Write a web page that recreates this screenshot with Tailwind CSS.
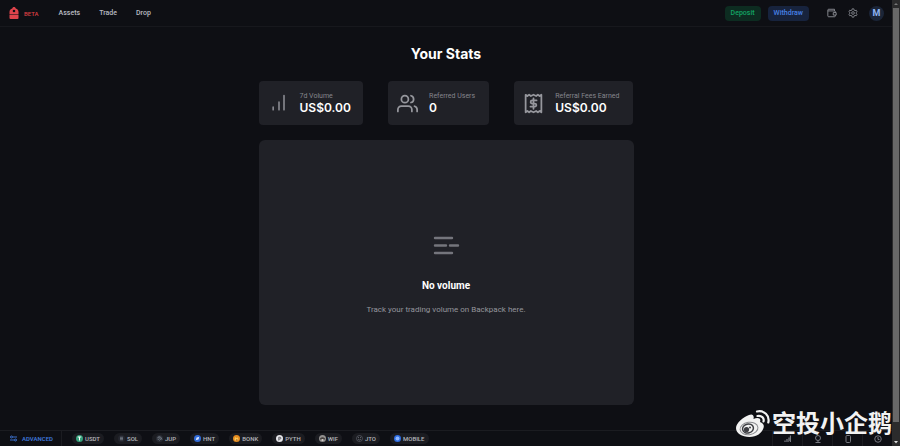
<!doctype html>
<html lang="en">
  <head>
    <meta charset="UTF-8" />
    <meta name="viewport" content="width=device-width, initial-scale=1.0" />
    <title>Backpack Exchange</title>
    <script src="https://cdn.jsdelivr.net/npm/@tailwindcss/browser@4"></script>
  </head>
  <body
    class="relative flex h-screen overflow-hidden bg-[#0e0f14] font-['Roboto','Noto_Sans_CJK_SC',sans-serif] text-white"
  >
    <div class="flex min-w-0 grow flex-col">
      <header
        class="flex h-[27px] shrink-0 items-center border-b border-[#17181d] pr-2 pl-[9px]"
      >
        <a class="flex items-center gap-[5px]" href="#">
          <svg class="h-3 w-[10px]" viewBox="0 0 20 24" fill="#e0444c">
            <path
              fill-rule="evenodd"
              d="M6.500 3C7 1 8.300 0 10 0s3 1 3.500 3C17 4 19 6.500 19 10v4.500H1V10c0-3.500 2-6 5.500-7ZM10 5.500a2.600 2.600 0 1 0 0 5.200 2.600 2.600 0 0 0 0-5.200Z"
            />
            <path d="M1 15.500h18V22a2 2 0 0 1-2 2H3a2 2 0 0 1-2-2z" />
          </svg>
          <span class="text-[6px] font-medium text-[#d93f43]">BETA</span>
        </a>

        <nav class="ml-5">
          <ul class="flex gap-[19px] text-[7px] font-medium text-[#b9bbc2]">
            <li><a href="#">Assets</a></li>
            <li><a href="#">Trade</a></li>
            <li><a href="#">Drop</a></li>
          </ul>
        </nav>

        <div class="ml-auto flex items-center">
          <button
            class="h-[15px] rounded bg-[#0d2c21] px-[6px] text-[7px] font-medium text-[#13a565]"
          >
            Deposit
          </button>
          <button
            class="ml-[7px] h-[15px] rounded bg-[#17233d] px-[6px] text-[7px] font-medium text-[#4781e6]"
          >
            Withdraw
          </button>
          <button class="ml-[18px] text-[#8d8f96]" aria-label="Wallet">
            <svg
              class="size-[10px]"
              viewBox="0 0 24 24"
              fill="none"
              stroke="currentColor"
              stroke-width="2.200"
              stroke-linejoin="round"
            >
              <path d="M18 7V3H4a2 2 0 0 0-2 2v14a2 2 0 0 0 2 2h14a2 2 0 0 0 2-2v-2" />
              <path d="M2 7h16a2 2 0 0 1 2 2v2M15 11h7v6h-7z" />
            </svg>
          </button>
          <button class="ml-[11px] text-[#8d8f96]" aria-label="Settings">
            <svg
              class="size-[10px]"
              viewBox="0 0 24 24"
              fill="none"
              stroke="currentColor"
              stroke-width="2"
              stroke-linejoin="round"
            >
              <path
                d="M10 2h4l.7 3.200 2 1.200 3.200-1 2 3.400-2.500 2.200v2l2.500 2.200-2 3.400-3.200-1-2 1.200L14 22h-4l-.7-3.200-2-1.200-3.200 1-2-3.400L4.600 13v-2L2.100 8.800l2-3.400 3.200 1 2-1.200z"
              />
              <circle cx="12" cy="12" r="3.200" />
            </svg>
          </button>
          <button
            class="ml-[11px] size-[15px] rounded-full bg-[#1b2538] text-[9px] leading-none font-bold text-[#8fb5f5]"
            aria-label="Account"
          >
            M
          </button>
        </div>
      </header>

      <main class="mx-auto flex w-full max-w-[375px] grow flex-col">
        <h1
          class="mt-[17px] text-center font-['Inter',sans-serif] text-[14px] leading-5 font-bold"
        >
          Your Stats
        </h1>

        <div class="mt-[17px] flex justify-between">
          <section
            class="flex h-11 items-center rounded bg-[#202127] pr-3 pl-[10px]"
          >
            <svg
              class="size-5 text-[#85868d]"
              viewBox="0 0 24 24"
              fill="none"
              stroke="currentColor"
              stroke-width="2"
              stroke-linecap="round"
            >
              <path d="M5 20v-3M12 20v-9M18 20V3" />
            </svg>
            <div class="ml-[11px]">
              <h2 class="text-[7px] leading-[10px] text-[#85868d]">7d Volume</h2>
              <p
                class="font-['Inter',sans-serif] text-[12px] leading-[14px] font-semibold"
              >
                US$0.00
              </p>
            </div>
          </section>

          <section
            class="flex h-11 items-center rounded bg-[#202127] pr-[14px] pl-[9px]"
          >
            <svg
              class="size-[21px] text-[#96979d]"
              viewBox="0 0 24 24"
              fill="none"
              stroke="currentColor"
              stroke-width="2"
              stroke-linecap="round"
              stroke-linejoin="round"
            >
              <path d="M17 21v-2a4 4 0 0 0-4-4H5a4 4 0 0 0-4 4v2" />
              <circle cx="9" cy="7" r="4" />
              <path d="M23 21v-2a4 4 0 0 0-3-3.870M16 3.130a4 4 0 0 1 0 7.750" />
            </svg>
            <div class="ml-[11px]">
              <h2 class="text-[7px] leading-[10px] text-[#85868d]">
                Referred Users
              </h2>
              <p
                class="font-['Inter',sans-serif] text-[12px] leading-[14px] font-semibold"
              >
                0
              </p>
            </div>
          </section>

          <section
            class="flex h-11 items-center rounded bg-[#202127] pr-[14px] pl-[9px]"
          >
            <svg
              class="size-[21px] text-[#96979d]"
              viewBox="0 0 24 24"
              fill="none"
              stroke="currentColor"
              stroke-width="2"
              stroke-linecap="round"
              stroke-linejoin="round"
            >
              <path
                d="M3 2l2 1.500L7 2l2 1.500L12 2l3 1.500L17 2l2 1.500L21 2v20l-2-1.500L17 22l-2-1.500L12 22l-3-1.500L7 22l-2-1.500L3 22z"
              />
              <path
                d="M12 6v12M15.500 8.500h-5a1.750 1.750 0 0 0 0 3.500h3a1.750 1.750 0 0 1 0 3.500h-5"
              />
            </svg>
            <div class="ml-[11px]">
              <h2 class="text-[7px] leading-[10px] text-[#85868d]">
                Referral Fees Earned
              </h2>
              <p
                class="font-['Inter',sans-serif] text-[12px] leading-[14px] font-semibold"
              >
                US$0.00
              </p>
            </div>
          </section>
        </div>

        <section
          class="mt-[15px] flex h-[265px] flex-col items-center rounded-md bg-[#202127] pt-[92px]"
        >
          <svg
            class="size-7 text-[#74757c]"
            viewBox="0 0 28 28"
            fill="none"
            stroke="currentColor"
            stroke-width="2.400"
            stroke-linecap="round"
          >
            <path d="M3 6h17M3 13.500h11M18 13.500h8M3 21h17" />
          </svg>
          <h2 class="mt-5 text-[10px] leading-3 font-bold">No volume</h2>
          <p class="mt-3 text-[8px] leading-3 text-[#94959c]">
            Track your trading volume on Backpack here.
          </p>
        </section>
      </main>

      <footer
        class="flex h-4 shrink-0 items-center border-t border-[#1b1c21] pl-[10px] text-[6px] font-medium text-[#b4b6bd]"
      >
        <button
          class="flex h-full items-center gap-[5px] border-r border-[#1b1c21] pr-[8px] font-semibold text-[#3f78dc]"
        >
          <svg
            class="h-[7px] w-[7px]"
            viewBox="0 0 14 14"
            fill="none"
            stroke="currentColor"
            stroke-width="1.800"
          >
            <path d="M0 4h1M5 4h9M0 10h9M13 10h1" />
            <circle cx="3" cy="4" r="2" />
            <circle cx="11" cy="10" r="2" />
          </svg>
          ADVANCED
        </button>
        <ul class="ml-[10px] flex gap-[10px]">
          <li>
            <a class="flex h-[11px] items-center gap-[2px] rounded-full bg-[#1b1c21] px-1" href="#">
              <svg class="size-[7px]" viewBox="0 0 14 14">
                <circle cx="7" cy="7" r="7" fill="#35a17b" />
                <path d="M3.500 4h7M7 4v7" stroke="#fff" stroke-width="2" />
              </svg>
              USDT
            </a>
          </li>
          <li>
            <a class="flex h-[11px] items-center gap-[2px] rounded-full bg-[#1b1c21] px-1" href="#">
              <svg class="size-[7px]" viewBox="0 0 14 14">
                <circle cx="7" cy="7" r="7" fill="#24262e" />
                <path d="M4 4.500h6M4 7h6M4 9.500h6" stroke="#8d96a3" stroke-width="1.300" />
              </svg>
              SOL
            </a>
          </li>
          <li>
            <a class="flex h-[11px] items-center gap-[2px] rounded-full bg-[#1b1c21] px-1" href="#">
              <svg class="size-[7px]" viewBox="0 0 14 14" fill="none">
                <circle cx="7" cy="7" r="7" fill="#2a2d35" />
                <path d="M3 5q5-1 7 5M5 3q6 0 7 6M3 8q3 0 4 3" stroke="#8d96a3" stroke-width="1.300" />
              </svg>
              JUP
            </a>
          </li>
          <li>
            <a class="flex h-[11px] items-center gap-[2px] rounded-full bg-[#1b1c21] px-1" href="#">
              <svg class="size-[7px]" viewBox="0 0 14 14">
                <circle cx="7" cy="7" r="7" fill="#316bd8" />
                <circle cx="7" cy="7" r="2.500" fill="#dce8ff" />
                <path d="M4 10l6-6" stroke="#dce8ff" stroke-width="1.800" />
              </svg>
              HNT
            </a>
          </li>
          <li>
            <a class="flex h-[11px] items-center gap-[2px] rounded-full bg-[#1b1c21] px-1" href="#">
              <svg class="size-[7px]" viewBox="0 0 14 14">
                <circle cx="7" cy="7" r="7" fill="#e58b20" />
                <path d="M3 10l1-6 3 2 3-1 1 5-4 2z" fill="#f7c955" />
                <path d="M6 9h3v2H6z" fill="#a33e20" />
              </svg>
              BONK
            </a>
          </li>
          <li>
            <a class="flex h-[11px] items-center gap-[2px] rounded-full bg-[#1b1c21] px-1" href="#">
              <svg class="size-[7px]" viewBox="0 0 14 14" fill="none">
                <circle cx="7" cy="7" r="7" fill="#e6e6ea" />
                <path d="M5.500 11V4.500H8a1.800 1.800 0 0 1 0 3.600H6" stroke="#34353c" stroke-width="1.400" />
              </svg>
              PYTH
            </a>
          </li>
          <li>
            <a class="flex h-[11px] items-center gap-[2px] rounded-full bg-[#1b1c21] px-1" href="#">
              <svg class="size-[7px]" viewBox="0 0 14 14">
                <circle cx="7" cy="7" r="7" fill="#92908f" />
                <path d="M2 7q5-5 10 0v2H2z" fill="#45403e" />
                <circle cx="7" cy="10" r="2" fill="#d8d2cd" />
              </svg>
              WIF
            </a>
          </li>
          <li>
            <a class="flex h-[11px] items-center gap-[2px] rounded-full bg-[#1b1c21] px-1" href="#">
              <svg class="size-[7px]" viewBox="0 0 14 14" fill="none" stroke="#777b84">
                <circle cx="7" cy="7" r="6" />
                <path d="M4 5h2M8 5h2M4 8q3 4 6 0" stroke-width="1.400" />
              </svg>
              JTO
            </a>
          </li>
          <li>
            <a class="flex h-[11px] items-center gap-[2px] rounded-full bg-[#1b1c21] px-1" href="#">
              <svg class="size-[7px]" viewBox="0 0 14 14">
                <circle cx="7" cy="7" r="7" fill="#2d6be0" />
                <circle cx="7" cy="7" r="4" fill="#8fb8ff" />
              </svg>
              MOBILE
            </a>
          </li>
        </ul>
        <div class="ml-auto flex h-full text-[#777980]">
          <button class="grid w-[30px] place-items-center border-l border-[#1b1c21]" aria-label="Connection">
            <svg class="size-[7px]" viewBox="0 0 14 14" stroke="currentColor" stroke-width="2.500">
              <path d="M2 14v-3M6 14V8M10 14V5M13 14V1" />
            </svg>
          </button>
          <button class="grid w-[30px] place-items-center border-l border-[#1b1c21]" aria-label="Support">
            <svg class="size-[8px]" viewBox="0 0 16 16" fill="none" stroke="currentColor" stroke-width="2">
              <circle cx="8" cy="6" r="5" />
              <path d="M8 11v3M3 15h10" />
            </svg>
          </button>
          <button class="grid w-[30px] place-items-center border-l border-[#1b1c21]" aria-label="Mobile app">
            <svg class="size-[8px]" viewBox="0 0 16 16" fill="none" stroke="currentColor" stroke-width="2">
              <rect x="4" y="1" width="9" height="14" rx="2" />
            </svg>
          </button>
          <button class="grid w-[30px] place-items-center border-l border-[#1b1c21]" aria-label="Status">
            <svg class="size-[8px]" viewBox="0 0 16 16" fill="none" stroke="currentColor" stroke-width="2">
              <circle cx="8" cy="8" r="6.500" />
              <path d="M8 4v5h3" />
            </svg>
          </button>
        </div>
      </footer>
    </div>

    <!-- scrollbar -->
    <div class="flex w-2 shrink-0 flex-col items-center bg-[#2b2b2c]">
      <svg class="size-2" viewBox="0 0 8 8" fill="#777"><path d="M4 3l2 2H2z" /></svg>
      <div class="h-[414px] w-[6px] bg-[#686868]"></div>
      <svg class="mt-auto size-2" viewBox="0 0 8 8" fill="#ddd"><path d="M4 5.500l2-2.500H2z" /></svg>
    </div>

    <!-- watermark -->
    <div
      class="pointer-events-none absolute right-2 bottom-2 flex items-center gap-[2px] text-[#f2f2f2]"
    >
      <svg class="h-7 w-[34px]" viewBox="0 0 34 28" fill="none">
        <path
          d="M13 5c3-1.500 5.500 0 4.500 4 4-1.800 8-1 6.500 3 3 1 4.500 3 3.500 6-1.500 5-7 9-14 9C6 27 0 23.500 0 18 0 13 7 7 13 5Z"
          fill="#f2f2f2"
        />
        <ellipse cx="13" cy="18.500" rx="9" ry="6.200" stroke="#8b8c90" transform="rotate(-8 13 18.500)" />
        <ellipse cx="12" cy="18.500" rx="5.500" ry="4.500" stroke="#3c3d42" stroke-width="1.500" transform="rotate(-15 12 18.500)" />
        <circle cx="10.500" cy="19.500" r="2.600" fill="#3c3d42" />
        <circle cx="14" cy="17.500" r="1" fill="#3c3d42" />
        <path
          d="M21 1.500c7-1.500 13 4 11.300 11M21.500 6c4-.8 7 2 6 5.500"
          stroke="#f2f2f2"
          stroke-width="2.200"
          stroke-linecap="round"
        />
      </svg>
      <p class="text-[24px] leading-7 font-bold whitespace-nowrap">空投小企鹅</p>
    </div>
  </body>
</html>
